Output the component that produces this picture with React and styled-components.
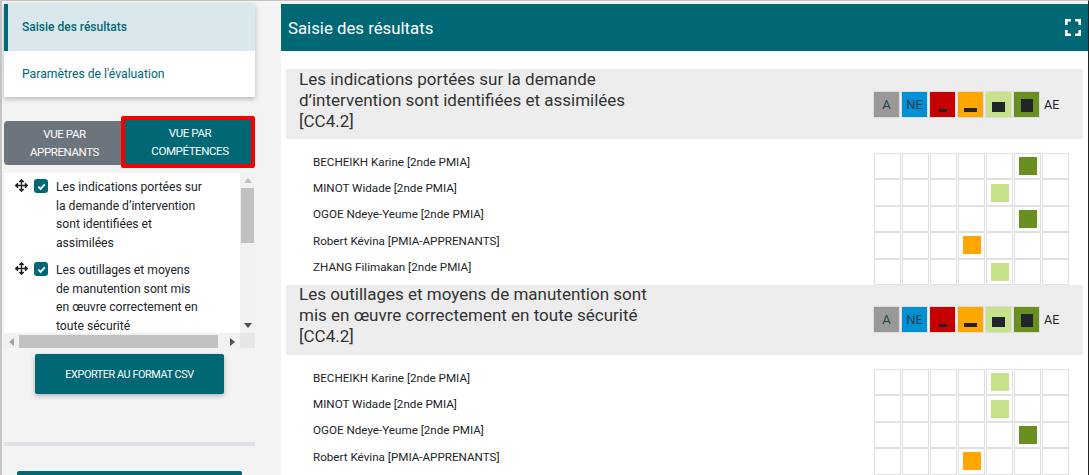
import React from 'react';
import styled, { createGlobalStyle } from 'styled-components';
import { FaArrowsAlt } from 'react-icons/fa';

const TEAL = '#006874';

const GlobalStyle = createGlobalStyle`
  html, body {
    margin: 0;
    height: 100%;
    overflow: hidden;
    background: #f3f3f3;
  }
  * { box-sizing: border-box; }
`;

const Page = styled.div`
  display: flex;
  height: 475px;
  overflow: hidden;
  padding: 3px 0 0 2px;
  font-family: Roboto, 'Liberation Sans', sans-serif;
  color: #212529;
  border-top: 1px solid #c4c4c4;
  border-left: 2px solid #c4c4c4;
  border-right: 1px solid #222;
`;

const Sidebar = styled.aside`
  width: 251px;
  flex-shrink: 0;
  margin-right: 26px;
`;

const NavCard = styled.nav`
  background: #fff;
  box-shadow: 0 2px 5px rgba(0, 0, 0, 0.25);
  margin-bottom: 24px;
`;

const NavItem = styled.div`
  height: 46.5px;
  display: flex;
  align-items: center;
  font-size: ${p => (p.$active ? '12px' : '12.2px')};
  color: ${TEAL};
  padding-left: 14px;
  background: ${p => (p.$active ? '#d9e8ec' : '#fff')};
  font-weight: ${p => (p.$active ? 500 : 400)};
  border-left: 4px solid ${p => (p.$active ? TEAL : '#fff')};
`;

const ToggleRow = styled.div`
  display: flex;
  height: 44px;
  margin-bottom: 8px;
`;

const ToggleButton = styled.div`
  display: flex;
  align-items: center;
  justify-content: center;
  text-align: center;
  color: #fff;
  font-size: 11.5px;
  letter-spacing: -0.4px;
  line-height: 18px;
  text-transform: uppercase;
  padding-left: 4px;
  background: ${p => (p.$active ? TEAL : '#6c757d')};
  width: ${p => (p.$active ? '134px' : '117px')};
  border-radius: ${p => (p.$active ? '2px' : '4px 0 0 4px')};
  border: ${p => (p.$active ? '4px solid #f40000' : 'none')};
  ${p => p.$active && 'margin: -5px 0 -3px; height: 52px;'}
`;

const ListFrame = styled.div`
  display: grid;
  grid-template-columns: 236px 15px;
  grid-template-rows: 160px 15px;
  margin-bottom: 6px;
`;

const ObjectiveList = styled.div`
  background: #fff;
  overflow: hidden;
  padding-top: 5px;
`;

const Objective = styled.div`
  display: flex;
  align-items: flex-start;
  padding-left: 11px;
  margin-bottom: 8.2px;
`;

const Grip = styled(FaArrowsAlt)`
  width: 13px;
  height: 13px;
  color: #212529;
  margin: 1px 6px 0 0;
  flex-shrink: 0;
`;

const CheckBox = styled.span`
  width: 14px;
  height: 14px;
  border-radius: 3px;
  background: ${TEAL};
  margin: 1px 8px 0 0;
  flex-shrink: 0;
  display: flex;
  align-items: center;
  justify-content: center;
`;

const ObjectiveText = styled.div`
  width: 148px;
  font-size: 12.15px;
  line-height: 18.7px;
`;

const ScrollTrack = styled.div`
  background: #f1f1f1;
  display: flex;
  flex-direction: ${p => (p.$horizontal ? 'row' : 'column')};
  align-items: ${p => (p.$horizontal ? 'flex-end' : 'center')};
`;

const ScrollThumb = styled.div`
  background: #c1c1c1;
  ${p => (p.$horizontal ? 'width: 199px; height: 13px;' : 'width: 13px; height: 55px;')}
`;

const ScrollSpacer = styled.div`
  flex: 1;
`;

const Arrow = styled.span`
  width: 0;
  height: 0;
  margin: ${p => (p.$horizontal ? '0 5px 2px' : '5px 0')};
  border: 4px solid transparent;
  ${p => `border-${p.$side}-width: 0;`}
  ${p => {
    const opposite = { top: 'bottom', bottom: 'top', left: 'right', right: 'left' }[p.$side];
    return `border-${opposite}: 5px solid ${p.$color};`;
  }}
`;

const Corner = styled.div`
  background: #e6e6e6;
`;

const ExportButton = styled.div`
  width: 189px;
  height: 40px;
  margin: 0 0 48px 31px;
  background: ${TEAL};
  color: #fff;
  border-radius: 2px;
  box-shadow: 0 2px 5px rgba(0, 0, 0, 0.25);
  display: flex;
  align-items: center;
  justify-content: center;
  font-size: 10.8px;
  letter-spacing: -0.4px;
  text-transform: uppercase;
`;

const Divider = styled.div`
  height: 4px;
  background: #dee2e6;
  margin-bottom: 25px;
`;

const BottomButton = styled.div`
  width: 225px;
  height: 40px;
  margin-left: 13px;
  background: ${TEAL};
  border-radius: 2px;
`;

const Main = styled.main`
  flex: 1;
  background: #fff;
  overflow: hidden;
`;

const MainHeader = styled.header`
  height: 47px;
  background: ${TEAL};
  color: #fff;
  display: flex;
  align-items: center;
  justify-content: space-between;
  padding: 0 7px;
  font-size: 16.8px;
`;

const Content = styled.div`
  padding: 18px 5px 0;
`;

const SectionHead = styled.div`
  height: 70px;
  background: #ededed;
  display: flex;
  align-items: center;
  justify-content: space-between;
  padding: 0 0 0 13px;
`;

const SectionTitle = styled.h2`
  margin: 0 0 8px;
  width: 355px;
  font-size: 17px;
  line-height: 21px;
  font-weight: 400;
  color: #333;
`;

const Legend = styled.div`
  display: flex;
  align-items: center;
  margin-right: 15px;
`;

const LegendCell = styled.div`
  width: 27px;
  height: 27px;
  margin-right: 1px;
  background: ${p => p.$color};
  border: 1px solid #ddd;
  display: flex;
  align-items: flex-end;
  justify-content: center;
  font-size: 13px;
  line-height: 15px;
  padding-bottom: ${p => (p.$text ? '5px' : '5px')};
  color: #27414d;
`;

const LegendBar = styled.span`
  display: block;
  background: #212529;
`;

const LegendLabel = styled.span`
  width: 27px;
  padding-left: 3px;
  font-size: 12.5px;
`;

const Rows = styled.div`
  padding: 14px 0 0;
`;

const Row = styled.div`
  display: flex;
  align-items: center;
  justify-content: space-between;
  height: 26.4px;
  padding: 0 13px 0 27px;
`;

const RowName = styled.span`
  font-size: 11.65px;
  padding-bottom: 9px;
`;

const Cells = styled.div`
  display: grid;
  grid-template-columns: repeat(7, 28px);
  height: 100%;
`;

const Cell = styled.div`
  border: 1px solid #e0e0e0;
  margin-right: 1px;
  display: flex;
  align-items: center;
  justify-content: center;
`;

const Swatch = styled.span`
  width: 18px;
  height: 18px;
  background: ${p => p.$color};
`;

const GREY = '#999999';
const BLUE = '#0090d4';
const RED = '#c40000';
const ORANGE = '#ffa600';
const LIGHT = '#c6e38c';
const GREEN = '#688f1f';

const legend = [
  { color: GREY, text: 'A' },
  { color: BLUE, text: 'NE' },
  { color: RED, bar: [8, 3] },
  { color: ORANGE, bar: [13, 4] },
  { color: LIGHT, bar: [13, 10] },
  { color: GREEN, bar: [12, 13] },
];

const swatchColors = { 3: ORANGE, 4: LIGHT, 5: GREEN };

const sections = [
  {
    title: 'Les indications portées sur la demande d’intervention sont identifiées et assimilées [CC4.2]',
    rows: [
      ['BECHEIKH Karine [2nde PMIA]', 5],
      ['MINOT Widade [2nde PMIA]', 4],
      ['OGOE Ndeye-Yeume [2nde PMIA]', 5],
      ['Robert Kévina [PMIA-APPRENANTS]', 3],
      ['ZHANG Filimakan [2nde PMIA]', 4],
    ],
  },
  {
    title: 'Les outillages et moyens de manutention sont mis en œuvre correctement en toute sécurité [CC4.2]',
    rows: [
      ['BECHEIKH Karine [2nde PMIA]', 4],
      ['MINOT Widade [2nde PMIA]', 4],
      ['OGOE Ndeye-Yeume [2nde PMIA]', 5],
      ['Robert Kévina [PMIA-APPRENANTS]', 3],
    ],
  },
];

const objectives = [
  'Les indications portées sur la demande d’intervention sont identifiées et assimilées',
  'Les outillages et moyens de manutention sont mis en œuvre correctement en toute sécurité',
];

const CheckIcon = () => (
  <svg width="9" height="9" viewBox="0 0 10 10">
    <path d="M1.5 5.2 4 7.6 8.6 2.6" fill="none" stroke="#fff" strokeWidth="2" />
  </svg>
);

const ExpandIcon = () => (
  <svg width="16" height="17" viewBox="0 0 16 17">
    <path d="M1.3 6V1.3H6M10 1.3H14.7V6M14.7 11V15.7H10M6 15.7H1.3V11" fill="none" stroke="#fff" strokeWidth="2.6" />
  </svg>
);

export default function App() {
  return (
    <Page>
      <GlobalStyle />
      <Sidebar>
        <NavCard>
          <NavItem $active>Saisie des résultats</NavItem>
          <NavItem>Paramètres de l'évaluation</NavItem>
        </NavCard>
        <ToggleRow>
          <ToggleButton>Vue par<br />apprenants</ToggleButton>
          <ToggleButton $active>Vue par<br />compétences</ToggleButton>
        </ToggleRow>
        <ListFrame>
          <ObjectiveList>
            {objectives.map(text => (
              <Objective key={text}>
                <Grip />
                <CheckBox><CheckIcon /></CheckBox>
                <ObjectiveText>{text}</ObjectiveText>
              </Objective>
            ))}
          </ObjectiveList>
          <ScrollTrack>
            <Arrow $side="top" $color="#c1c1c1" />
            <ScrollThumb />
            <ScrollSpacer />
            <Arrow $side="bottom" $color="#505050" />
          </ScrollTrack>
          <ScrollTrack $horizontal>
            <Arrow $horizontal $side="left" $color="#a3a3a3" />
            <ScrollThumb $horizontal />
            <ScrollSpacer />
            <Arrow $horizontal $side="right" $color="#505050" />
          </ScrollTrack>
          <Corner />
        </ListFrame>
        <ExportButton>Exporter au format CSV</ExportButton>
        <Divider />
        <BottomButton />
      </Sidebar>
      <Main>
        <MainHeader>
          Saisie des résultats
          <ExpandIcon />
        </MainHeader>
        <Content>
          {sections.map(section => (
            <section key={section.title}>
              <SectionHead>
                <SectionTitle>{section.title}</SectionTitle>
                <Legend>
                  {legend.map(item => (
                    <LegendCell key={item.color} $color={item.color} $text={!!item.text}>
                      {item.text}
                      {item.bar && <LegendBar style={{ width: item.bar[0], height: item.bar[1] }} />}
                    </LegendCell>
                  ))}
                  <LegendLabel>AE</LegendLabel>
                </Legend>
              </SectionHead>
              <Rows>
                {section.rows.map(([name, mark]) => (
                  <Row key={name}>
                    <RowName>{name}</RowName>
                    <Cells>
                      {[0, 1, 2, 3, 4, 5, 6].map(i => (
                        <Cell key={i}>
                          {i === mark && <Swatch $color={swatchColors[mark]} />}
                        </Cell>
                      ))}
                    </Cells>
                  </Row>
                ))}
              </Rows>
            </section>
          ))}
        </Content>
      </Main>
    </Page>
  );
}
